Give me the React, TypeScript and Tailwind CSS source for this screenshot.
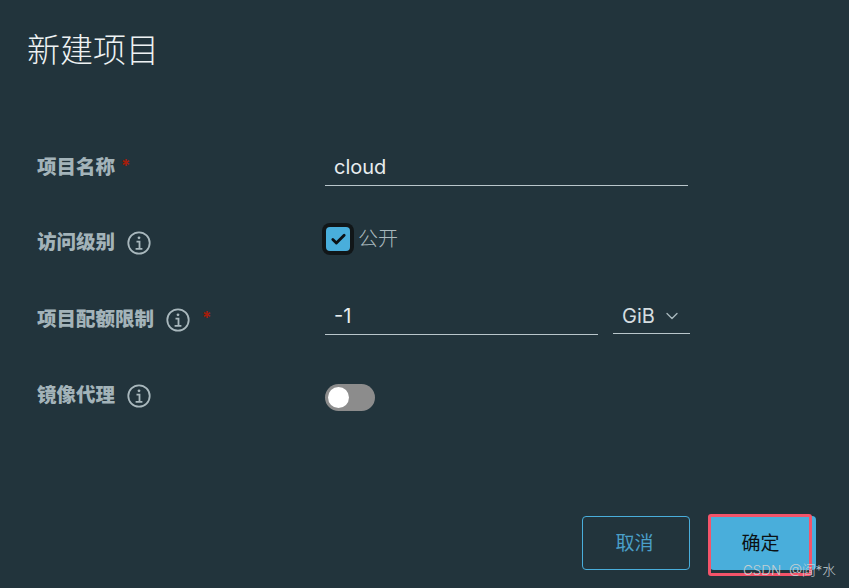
import { Check, ChevronDown } from 'lucide-react';

const cjk = "font-['Inter','Noto_Sans_CJK_SC',sans-serif]";

function InfoIcon() {
  return (
    <svg width="24" height="24" viewBox="0 0 24 24" fill="none" stroke="#a9b8bd" className="shrink-0">
      <circle cx="12" cy="12" r="10.7" strokeWidth="1.8" />
      <circle cx="12" cy="6.8" r="1.4" fill="#a9b8bd" stroke="none" />
      <path d="M9.5 10.6h3v7M8.6 17.8h6.8" strokeWidth="1.8" />
    </svg>
  );
}

function Label({ text, info, required }: { text: string; info?: boolean; required?: boolean }) {
  return (
    <div className="w-[288px] shrink-0 flex items-center">
      <span className="text-[19.5px] leading-none font-black text-[#a3b3b9]">{text}</span>
      {info && (
        <span className="ml-3">
          <InfoIcon />
        </span>
      )}
      {required && <span className={`-mt-[4px] text-[#a51d0b] text-[17px] leading-none font-bold ${info ? 'ml-3' : 'ml-[6px]'}`}>*</span>}
    </div>
  );
}

function App() {
  return (
    <div className={`relative w-[849px] h-[588px] overflow-hidden bg-[#22343c] flex flex-col ${cjk}`}>
      <h1 className="pl-[27px] pt-[27px] text-[33px] leading-[46px] font-light text-[#eef2f3]">新建项目</h1>

      <div className="pl-[37px] pt-[73px] flex flex-col">
        <div className="h-[44px] flex items-center">
          <Label text="项目名称" required />
          <div className="w-[363px] h-[35px] flex items-center pl-[9px] pb-[2px] border-b border-[#b9c6cb] text-[20px] text-[#e8edef]">
            cloud
          </div>
        </div>

        <div className="h-[44px] mt-[31px] flex items-center">
          <Label text="访问级别" info />
          <div className="flex items-center gap-[4px] -mt-[8px] -ml-[3px]">
            <div className="size-[32px] rounded-[8px] bg-[#111618] flex items-center justify-center">
              <div className="size-[24px] rounded-[4px] bg-[#49aedb] flex items-center justify-center">
                <Check size={17} strokeWidth={4} color="#0c1114" />
              </div>
            </div>
            <span className="text-[20px] leading-none font-light text-[#a9b8bd]">公开</span>
          </div>
        </div>

        <div className="h-[44px] mt-[33px] flex items-center">
          <Label text="项目配额限制" info required />
          <div className="w-[273px] h-[29px] flex items-center pl-[9px] pb-[8px] border-b border-[#b9c6cb] text-[20px] text-[#e8edef]">
            -1
          </div>
          <div className="ml-[15px] w-[77px] h-[27px] flex items-center justify-between pl-[9px] pr-[8px] pb-[7px] border-b border-[#b9c6cb] text-[20px] text-[#d5dde0]">
            GiB
            <ChevronDown size={20} strokeWidth={1.6} color="#a9b8bd" />
          </div>
        </div>

        <div className="h-[44px] mt-[32px] flex items-center">
          <Label text="镜像代理" info />
          <div className="w-[50px] h-[27px] mt-[2px] rounded-full bg-[#8c8c8c] flex items-center pl-[3px]">
            <div className="size-[21px] rounded-full bg-white" />
          </div>
        </div>
      </div>

      <div className="mt-auto mb-[18px] pl-[582px] flex items-start gap-[20px]">
        <button className="w-[108px] h-[54px] pr-[3px] pt-[3px] rounded-[4px] border border-[#49aedb] text-[19px] text-[#4a9fc8]">取消</button>
        <button className="w-[106px] h-[54px] pr-[5px] pt-[3px] rounded-[4px] bg-[#49aedb] text-[19px] text-[#0c1114]">确定</button>
      </div>

      {/* red annotation box drawn over the screenshot */}
      <div className="absolute left-[708px] top-[514px] w-[104px] h-[62px] rounded-[3px] border-[3px] border-[#f4546a]" />
      {/* watermark */}
      <span className="absolute left-[743px] top-[560px] text-[13.5px] leading-[20px] font-light whitespace-pre text-[#c3ced2]">CSDN  @阎*水</span>
    </div>
  );
}

export default App;
